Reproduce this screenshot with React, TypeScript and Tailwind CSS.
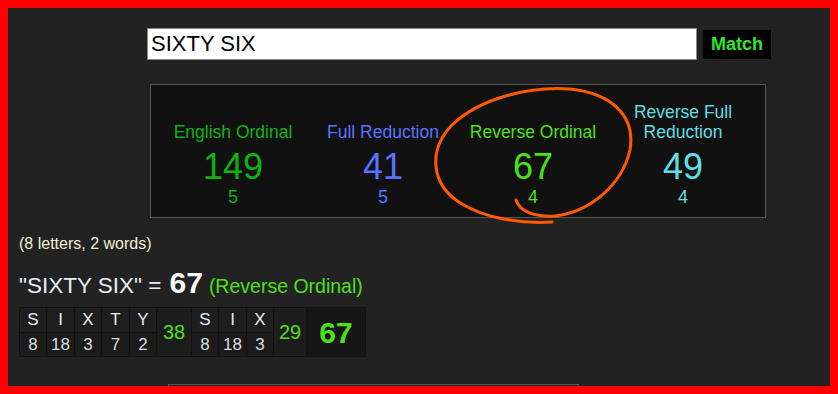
import React from "react";

const SYSTEMS = [
  { name: "English Ordinal", value: 149, reduced: 5, color: "text-[#11b111]" },
  { name: "Full Reduction", value: 41, reduced: 5, color: "text-[#5a72ff]" },
  { name: "Reverse Ordinal", value: 67, reduced: 4, color: "text-[#4de01a]" },
  { name: "Reverse Full Reduction", value: 49, reduced: 4, color: "text-[#62dde6]" },
];

const WORDS = [
  {
    letters: [
      { ch: "S", v: 8, w: "w-[26px]" },
      { ch: "I", v: 18, w: "w-[27px]" },
      { ch: "X", v: 3, w: "w-[26px]" },
      { ch: "T", v: 7, w: "w-[27px]" },
      { ch: "Y", v: 2, w: "w-[26px]" },
    ],
    total: 38,
    totalW: "w-[34px]",
  },
  {
    letters: [
      { ch: "S", v: 8, w: "w-[26px]" },
      { ch: "I", v: 18, w: "w-[27px]" },
      { ch: "X", v: 3, w: "w-[26px]" },
    ],
    total: 29,
    totalW: "w-[32px]",
  },
];

export default function App() {
  return (
    <div className="relative w-[838px] h-[394px] border-8 border-[#ff0000] bg-[#222222] overflow-hidden font-['Liberation_Sans',Arial,sans-serif]">
      {/* Search row */}
      <div className="flex items-center gap-[6px] mt-[20px] ml-[139px]">
        <div className="w-[550px] h-[32px] bg-white border border-[#8a8a8a] flex items-center px-[3px] text-[22px] text-black leading-none">
          SIXTY SIX
        </div>
        <div className="w-[68px] h-[29px] bg-black flex items-center justify-center text-[18px] font-bold text-[#2be82b]">
          Match
        </div>
      </div>

      {/* Cipher panel */}
      <div className="mt-[24px] ml-[142px] w-[616px] h-[134px] bg-[#111111] border border-[#555555] px-[7px] flex">
        {SYSTEMS.map((s) => (
          <div key={s.name} className={`w-[150px] flex flex-col items-center ${s.color}`}>
            <div className="h-[57px] flex items-end justify-center text-center text-[17.5px] leading-[20px]">
              {s.name}
            </div>
            <div className="mt-[5px] text-[36px] leading-[40px]">{s.value}</div>
            <div className="text-[18px] leading-[20px]">{s.reduced}</div>
          </div>
        ))}
      </div>

      <div className="mt-[16px] ml-[11px] text-[16px] leading-[20px] text-[#f2f0d2]">
        (8 letters, 2 words)
      </div>

      <div className="mt-[14px] ml-[11px] flex items-baseline leading-none">
        <span className="text-[22.5px] text-[#e8eef8]">"SIXTY SIX" =</span>
        <span className="ml-[8px] text-[30px] font-bold text-white">67</span>
        <span className="ml-[6px] text-[19.5px] text-[#4de01a]">(Reverse Ordinal)</span>
      </div>

      {/* Letter breakdown */}
      <div className="mt-[9px] ml-[11px] inline-flex gap-px p-px bg-[#111111]">
        {WORDS.map((word, i) => (
          <React.Fragment key={i}>
            {word.letters.map((l, j) => (
              <div key={j} className={`${l.w} flex flex-col gap-px`}>
                <div className="h-[24px] bg-[#1e1e1e] flex items-center justify-center text-[17px] text-[#e2ebf4]">
                  {l.ch}
                </div>
                <div className="h-[23px] bg-[#1b1b1b] flex items-center justify-center text-[17px] text-[#dddddd]">
                  {l.v}
                </div>
              </div>
            ))}
            <div className={`${word.totalW} bg-[#1c1c1c] flex items-center justify-center text-[20px] text-[#4de01a]`}>
              {word.total}
            </div>
          </React.Fragment>
        ))}
        <div className="w-[58px] bg-[#161616] flex items-center justify-center text-[30px] font-bold text-[#4de01a]">
          67
        </div>
      </div>

      <div className="mt-[27px] ml-[160px] w-[411px] h-[20px] border border-[#555555]" />

      {/* hand-drawn circle */}
      <svg
        className="absolute left-0 top-0 pointer-events-none"
        width="822"
        height="378"
        viewBox="8 8 822 378"
        fill="none"
      >
        <path
          d="M516 200 C520 212 535 217 555 216 C590 212 622 185 630 150 C636 115 610 93 570 89 C530 86 480 98 452 125 C428 150 430 185 462 204 C485 218 520 224 552 222"
          stroke="#ff5a00"
          strokeWidth="3"
          strokeLinecap="round"
          strokeLinejoin="round"
        />
      </svg>
    </div>
  );
}
